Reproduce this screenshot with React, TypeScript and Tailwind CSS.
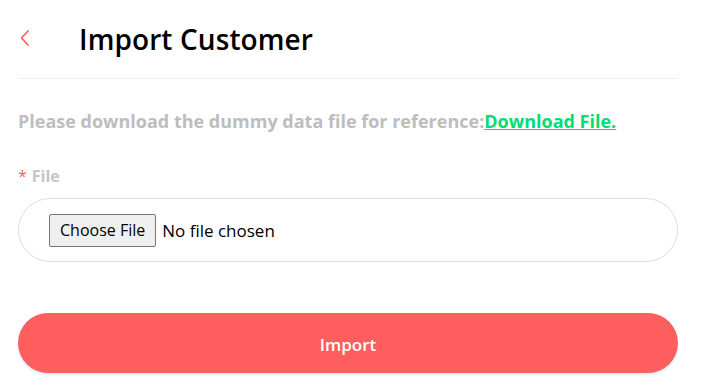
export default function App() {
  return (
    <div className="min-h-screen bg-white pl-[18px] pr-[30px] font-['Open_Sans','Noto_Sans',sans-serif]">
      {/* header */}
      <div className="flex items-center h-[79px] border-b border-[#eeeeee]">
        <button className="w-[61px] h-[40px] flex items-center pl-[1px] -mt-[2px] text-[#ff5e5e]">
          <svg width="12" height="18" viewBox="0 0 12 18" fill="none">
            <path d="M9 2 L2.5 9 L9 16" stroke="currentColor" strokeWidth="1.8" strokeLinecap="round" strokeLinejoin="round" />
          </svg>
        </button>
        <h1 className="text-[28px] font-semibold text-black leading-none tracking-[0.1px]">Import Customer</h1>
      </div>

      {/* note */}
      <p className="mt-[29px] text-[18px] font-bold text-[#bdbdbd] leading-[26px]">
        Please download the dummy data file for reference:
        <a href="#" className="text-[#00dc73] underline">Download File.</a>
      </p>

      {/* file field */}
      <div className="mt-[31px]">
        <label className="flex items-center gap-[5px] text-[16px] font-bold text-[#c4c4c4] leading-[22px]">
          <span className="text-[#ff5e5e] font-normal">*</span>
          File
        </label>
        <div className="mt-[11px] h-[64px] rounded-full border border-[#dddddd] flex items-center pl-[30px]">
          <input
            type="file"
            className="text-[17px] text-black font-['Open_Sans',sans-serif] file:mr-[6px] file:px-[10px] file:h-[33px] file:border file:border-[#767676] file:rounded-[2px] file:bg-[#efefef] file:text-[16px] file:text-black"
          />
        </div>
      </div>

      {/* submit */}
      <button className="mt-[51px] w-full h-[60px] rounded-full bg-[#ff5e5e] text-white text-[17px] font-semibold pt-[3px] shadow-[0_2px_3px_rgba(150,200,255,0.35)]">
        Import
      </button>
    </div>
  );
}
